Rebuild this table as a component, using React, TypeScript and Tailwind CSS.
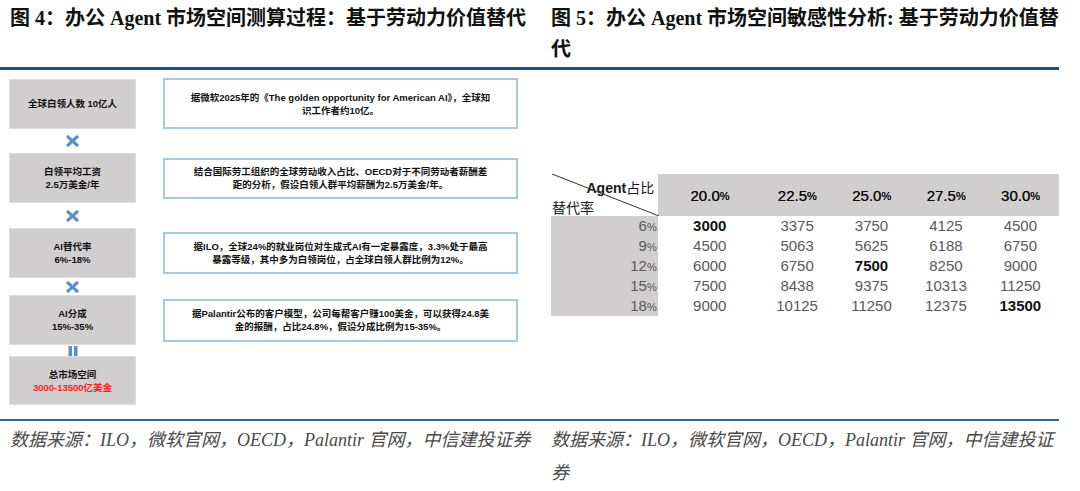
// Two report figures side by side: a labour-value flowchart (图 4) and the
// sensitivity table built from it (图 5).

const serif = 'font-["Liberation_Serif","Noto_Sans_CJK_SC",serif]';

const steps: { label: string[]; note: string[]; noteH: string }[] = [
  { label: ['全球白领人数 10亿人'], note: ['据微软2025年的《The golden opportunity for American AI》，全球知', '识工作者约10亿。'], noteH: 'h-[51px]' },
  { label: ['白领平均工资', '2.5万美金/年'], note: ['结合国际劳工组织的全球劳动收入占比、OECD对于不同劳动者薪酬差', '距的分析，假设白领人群平均薪酬为2.5万美金/年。'], noteH: 'h-[41px]' },
  { label: ['AI替代率', '6%-18%'], note: ['据ILO，全球24%的就业岗位对生成式AI有一定暴露度，3.3%处于最高', '暴露等级，其中多为白领岗位，占全球白领人群比例为12%。'], noteH: 'h-[42px]' },
  { label: ['AI分成', '15%-35%'], note: ['据Palantir公布的客户模型，公司每帮客户赚100美金，可以获得24.8美', '金的报酬，占比24.8%，假设分成比例为15-35%。'], noteH: 'h-[43px]' },
];

const gaps = ['h-[24px]', 'h-[25px]', 'h-[17px]', 'h-[11px]'];

const cols = ['20.0', '22.5', '25.0', '27.5', '30.0'];
const colW = ['w-[104px]', 'w-[72px]', 'w-[78px]', 'w-[72px]', 'w-[78px]'];
const rows: { rate: string; vals: string[]; bold?: number }[] = [
  { rate: '6', vals: ['3000', '3375', '3750', '4125', '4500'], bold: 0 },
  { rate: '9', vals: ['4500', '5063', '5625', '6188', '6750'] },
  { rate: '12', vals: ['6000', '6750', '7500', '8250', '9000'], bold: 2 },
  { rate: '15', vals: ['7500', '8438', '9375', '10313', '11250'] },
  { rate: '18', vals: ['9000', '10125', '11250', '12375', '13500'], bold: 4 },
];

function Times() {
  return (
    <svg width="13" height="12" viewBox="0 0 13 12">
      <path d="M2.2 0 L6.5 4 L10.8 0 L13 2.1 L8.7 6 L13 9.9 L10.8 12 L6.5 8 L2.2 12 L0 9.9 L4.3 6 L0 2.1 Z" fill="#5b8bc7" stroke="#8fb1dc" strokeWidth="0.5" />
    </svg>
  );
}

function Equals() {
  return (
    <svg width="10" height="10" viewBox="0 0 10 10">
      <rect x="0.5" y="0" width="3.5" height="10" fill="#5b8bc7" />
      <rect x="6" y="0" width="3.5" height="10" fill="#5b8bc7" />
    </svg>
  );
}

const Pct = () => <span className="text-[11px] tracking-tighter">%</span>;

function Flow() {
  const box = 'w-[127px] bg-[#d0cece] border border-[#dedddd] flex flex-col items-center justify-center text-[9.5px] leading-[13px] font-bold text-[#111]';
  return (
    <div className='h-[349px] pt-[8px] pl-[9px] font-["Liberation_Sans","Noto_Sans_CJK_SC",sans-serif]'>
      {steps.map((s, i) => (
        <div key={i}>
          <div className="flex items-center">
            <div className={`${box} h-[50px]`}>
              {s.label.map(l => <span key={l}>{l}</span>)}
            </div>
            <div className={`ml-[27px] w-[355px] ${s.noteH} border-2 border-[#a9c8e8] bg-white flex flex-col items-center justify-center text-[9.5px] leading-[13px] font-bold text-[#111] whitespace-nowrap`}>
              {s.note.map(n => <span key={n}>{n}</span>)}
            </div>
          </div>
          <div className={`${gaps[i]} w-[127px] flex items-center justify-center`}>
            {i < 3 ? <Times /> : <Equals />}
          </div>
        </div>
      ))}
      <div className={`${box} h-[49px]`}>
        <span>总市场空间</span>
        <span className="text-[#ff1a1a]">3000-13500亿美金</span>
      </div>
    </div>
  );
}

function Sensitivity() {
  return (
    <div className='h-[349px] pt-[104px] pl-[11px] font-["Liberation_Sans","Noto_Sans_CJK_SC",sans-serif]'>
      <div className="flex h-[42px]">
        <div className="relative w-[107px] flex flex-col pt-[4px] text-[14px] leading-[20px] text-[#1a1a1a]">
          <svg className="absolute inset-0" width="107" height="42" viewBox="0 0 107 42">
            <line x1="0" y1="0" x2="107" y2="42" stroke="#333" strokeWidth="1" />
          </svg>
          <span className="text-right pr-[4px]"><b>Agent</b>占比</span>
          <span className="text-left">替代率</span>
        </div>
        {cols.map((c, i) => (
          <div key={c} className={`${colW[i]} bg-[#d0cece] flex items-center justify-center text-[15px] text-[#111] pt-[3px] [text-shadow:0_0_0.4px_#111]`}>
            {c}<Pct />
          </div>
        ))}
      </div>
      {rows.map(r => (
        <div key={r.rate} className="flex h-[20px] text-[15px] leading-[20px]">
          <div className="w-[108px] -ml-[1px] bg-[#d0cece] text-right pr-[2px] text-[#595959]">
            {r.rate}<Pct />
          </div>
          {r.vals.map((v, i) => (
            <div key={i} className={`${colW[i]} text-center ${r.bold === i ? 'font-bold text-[#111]' : 'text-[#595959]'}`}>{v}</div>
          ))}
        </div>
      ))}
    </div>
  );
}

export default function App() {
  const title = `${serif} h-[67px] pl-[10px] pt-[3px] text-[20px] leading-[31px] font-bold text-[#111] whitespace-nowrap`;
  const source = `${serif} pl-[10px] pt-[3px] text-[18px] leading-[33px] italic text-[#4a4a4a] whitespace-nowrap`;
  return (
    <div className="w-[1080px] h-[491px] bg-white flex overflow-hidden">
      <div className="w-[541px] flex flex-col">
        <h2 className={title}>图 4：办公 Agent 市场空间测算过程：基于劳动力价值替代</h2>
        <div className="h-[3px] bg-[#17508a]" />
        <Flow />
        <div className="h-[2px] bg-[#2f6299]" />
        <p className={source}>数据来源：ILO，微软官网，OECD，Palantir 官网，中信建投证券</p>
      </div>
      <div className="w-[518px] flex flex-col">
        <h2 className={title}>图 5：办公 Agent 市场空间敏感性分析: 基于劳动力价值替<br />代</h2>
        <div className="h-[3px] bg-[#17508a]" />
        <Sensitivity />
        <div className="h-[2px] bg-[#2f6299]" />
        <p className={source}>数据来源：ILO，微软官网，OECD，Palantir 官网，中信建投证<br />券</p>
      </div>
    </div>
  );
}
